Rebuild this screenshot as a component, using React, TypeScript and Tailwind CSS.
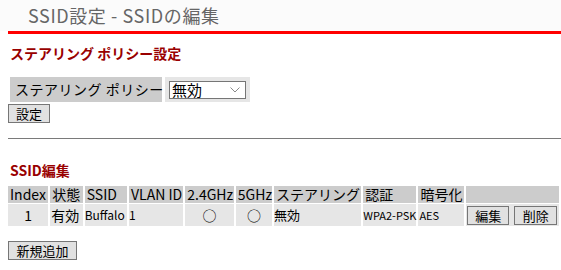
const font = { fontFamily: '"Noto Sans CJK JP", "Noto Sans", sans-serif' };

function Btn({ children, className = "" }: { children: React.ReactNode; className?: string }) {
  return (
    <button
      className={
        "flex h-[19px] items-center justify-center whitespace-nowrap border border-[#767676] bg-[#e1e1e1] p-0 text-[13px] leading-[17px] text-black " +
        className
      }
    >
      {children}
    </button>
  );
}

const cols = [
  { label: "Index", w: "w-[42px]" },
  { label: "状態", w: "w-[34px]" },
  { label: "SSID", w: "w-[44px]" },
  { label: "VLAN ID", w: "w-[55px]" },
  { label: "2.4GHz", w: "w-[49px]" },
  { label: "5GHz", w: "w-[35px]" },
  { label: "ステアリング", w: "w-[88px]" },
  { label: "認証", w: "w-[50px]" },
  { label: "暗号化", w: "w-[47px]" },
  { label: "", w: "w-[94px]" },
];

export default function App() {
  return (
    <div className="w-[561px] h-[270px] overflow-hidden bg-white text-black" style={font}>
      {/* title */}
      <div className="h-[31px] whitespace-nowrap bg-[#fbfbfb] pl-[28px] text-[18px] leading-[31px] tracking-[0.6px] text-[#666]">
        SSID設定 - SSIDの編集
      </div>
      <div className="ml-[8px] h-[3px] bg-[#ff0000]" />

      {/* steering policy */}
      <div className="whitespace-nowrap pt-[10px] pl-[10px] text-[14px] font-bold leading-[18px] text-[#990000]">
        ステアリング ポリシー設定
      </div>
      <div className="ml-[10px] mt-[15px] flex h-[25px] gap-[3px]">
        <div className="flex w-[152px] items-center whitespace-nowrap bg-[#cccccc] pl-[5px] text-[14px] tracking-[0.5px]">
          ステアリング ポリシー
        </div>
        <div className="flex w-[85px] items-center bg-[#e6e6e6] pl-[4px]">
          <div className="flex h-[18px] w-[77px] items-center justify-between border border-[#767676] bg-white pl-[2px] pr-[5px] text-[15px] leading-[16px]">
            <span>無効</span>
            <svg width="10" height="6" viewBox="0 0 10 6" fill="none">
              <path d="M0.5 0.5 L5 5 L9.5 0.5" stroke="#8a8a8a" strokeWidth="1" />
            </svg>
          </div>
        </div>
      </div>
      <div className="ml-[8px] mt-[2px] flex">
        <Btn className="w-[42px]">設定</Btn>
      </div>
      <div className="ml-[8px] mt-[15px] border-t border-[#7a7a7a]" />

      {/* SSID table */}
      <div className="mt-[22px] pl-[10px] text-[14px] font-bold leading-[18px] text-[#990000]">SSID編集</div>
      <table className="ml-[6px] mt-[6px] table-fixed border-separate border-spacing-x-[2px] border-spacing-y-[1px] text-[14px]">
        <thead>
          <tr className="h-[17px]">
            {cols.map((c, i) => (
              <th
                key={i}
                className={c.w + " bg-[#cccccc] p-0 pl-[2px] text-left font-normal leading-[17px] whitespace-nowrap"}
              >
                {c.label}
              </th>
            ))}
          </tr>
        </thead>
        <tbody>
          <tr className="h-[22px] bg-[#e6e6e6] whitespace-nowrap">
            <td className="p-0 text-center">1</td>
            <td className="p-0 pl-[1px]">有効</td>
            <td className="p-0 text-[12px]">Buffalo</td>
            <td className="p-0 text-[12px]">1</td>
            <td className="p-0 text-center">○</td>
            <td className="p-0 text-center">○</td>
            <td className="p-0 text-[13px]">無効</td>
            <td className="p-0 text-[11px]">WPA2-PSK</td>
            <td className="p-0 pl-[1px] text-[11px]">AES</td>
            <td className="p-0 pl-[1px]">
              <div className="flex gap-[5px]">
                <Btn className="w-[42px]">編集</Btn>
                <Btn className="w-[43px]">削除</Btn>
              </div>
            </td>
          </tr>
        </tbody>
      </table>
      <div className="ml-[8px] mt-[14px] flex">
        <Btn className="w-[69px]">新規追加</Btn>
      </div>
    </div>
  );
}
